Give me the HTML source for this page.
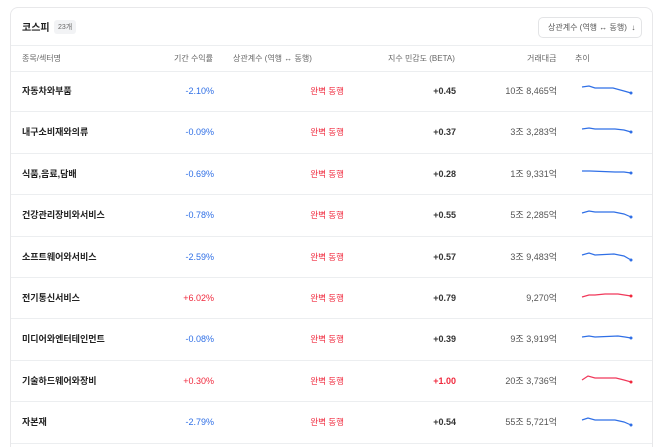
<!DOCTYPE html>
<html><head><meta charset="utf-8"><style>
*{margin:0;padding:0;box-sizing:border-box}
html,body{width:660px;height:447px;overflow:hidden}
body{background:#fff;font-family:"Liberation Sans","Noto Sans CJK KR",sans-serif;position:relative}
.card{position:absolute;left:10px;top:7px;width:643px;height:450px;border:1px solid #e8e8ea;border-radius:8px;background:#fff;overflow:hidden}
.title{position:absolute;left:11px;top:11px;font-size:10px;font-weight:bold;color:#222}
.badge{position:absolute;left:43px;top:12px;font-size:7px;color:#666;background:#f2f3f5;border-radius:3px;padding:2px 4px}
.btn{position:absolute;left:527px;top:9px;width:104px;height:21px;border:1px solid #e3e4e6;border-radius:5px;font-size:8px;color:#555;line-height:19px;padding-left:9px}
.hl{position:absolute;left:0;right:0;height:1px;background:#eceef0}
.h{position:absolute;top:45px;font-size:8px;color:#666}
.row{position:absolute;left:0;width:641px;height:41.4px;border-bottom:1px solid #eceef0;font-size:9px}
.row div{position:absolute;top:0;line-height:41px}
.n{left:11px;font-weight:bold;color:#222}
.r{right:438px}
.c{right:308px;color:#f0283c;font-size:8.5px}
.b{right:196px;font-weight:bold;color:#333}
.v{right:95px;color:#555}
.blue{color:#2f6fe6}.red{color:#f0283c}
svg{position:absolute;left:569px;top:12px}
</style></head><body>
<div class="card">
<div class="title">코스피</div><div class="badge">23개</div>
<div class="btn">상관계수 (역행 ↔ 동행) &nbsp;↓</div>
<div class="hl" style="top:37px"></div>
<div class="h" style="left:11px">종목/섹터명</div>
<div class="h" style="left:163px">기간 수익률</div>
<div class="h" style="left:222px">상관계수 (역행 ↔ 동행)</div>
<div class="h" style="left:377px">지수 민감도 (BETA)</div>
<div class="h" style="left:516px">거래대금</div>
<div class="h" style="left:564px">추이</div>
<div class="hl" style="top:63px"></div>

<div class="row" style="top:63px"><div class="n">자동차와부품</div><div class="r blue">-2.10%</div><div class="c">완벽 동행</div><div class="b">+0.45</div><div class="v">10조 8,465억</div>
<svg width="56" height="18"><path d="M2 4 L9 3 L15 5 L33 5 L44 8 L51 10" fill="none" stroke="#2f6fe6" stroke-width="1.2"/><circle cx="51" cy="10" r="1.5" fill="#2f6fe6"/></svg></div>
<div class="row" style="top:104.4px"><div class="n">내구소비재와의류</div><div class="r blue">-0.09%</div><div class="c">완벽 동행</div><div class="b">+0.37</div><div class="v">3조 3,283억</div>
<svg width="56" height="18"><path d="M2 5 L9 4 L15 5 L35 5 L44 6 L51 8" fill="none" stroke="#2f6fe6" stroke-width="1.2"/><circle cx="51" cy="8" r="1.5" fill="#2f6fe6"/></svg></div>
<div class="row" style="top:145.8px"><div class="n">식품,음료,담배</div><div class="r blue">-0.69%</div><div class="c">완벽 동행</div><div class="b">+0.28</div><div class="v">1조 9,331억</div>
<svg width="56" height="18"><path d="M2 5 L10 5 L35 6 L44 6 L51 7" fill="none" stroke="#2f6fe6" stroke-width="1.2"/><circle cx="51" cy="7" r="1.5" fill="#2f6fe6"/></svg></div>
<div class="row" style="top:187.2px"><div class="n">건강관리장비와서비스</div><div class="r blue">-0.78%</div><div class="c">완벽 동행</div><div class="b">+0.55</div><div class="v">5조 2,285억</div>
<svg width="56" height="18"><path d="M2 6 L9 4 L15 5 L34 5 L44 7 L51 10" fill="none" stroke="#2f6fe6" stroke-width="1.2"/><circle cx="51" cy="10" r="1.5" fill="#2f6fe6"/></svg></div>
<div class="row" style="top:228.6px"><div class="n">소프트웨어와서비스</div><div class="r blue">-2.59%</div><div class="c">완벽 동행</div><div class="b">+0.57</div><div class="v">3조 9,483억</div>
<svg width="56" height="18"><path d="M2 6 L9 4 L15 6 L34 5 L44 7 L51 11" fill="none" stroke="#2f6fe6" stroke-width="1.2"/><circle cx="51" cy="11" r="1.5" fill="#2f6fe6"/></svg></div>
<div class="row" style="top:270px"><div class="n">전기통신서비스</div><div class="r red">+6.02%</div><div class="c">완벽 동행</div><div class="b">+0.79</div><div class="v">9,270억</div>
<svg width="56" height="18"><path d="M2 7 L9 5 L15 5 L25 4 L38 4 L51 6" fill="none" stroke="#f0385a" stroke-width="1.2"/><circle cx="51" cy="6" r="1.5" fill="#f0283c"/></svg></div>
<div class="row" style="top:311.4px"><div class="n">미디어와엔터테인먼트</div><div class="r blue">-0.08%</div><div class="c">완벽 동행</div><div class="b">+0.39</div><div class="v">9조 3,919억</div>
<svg width="56" height="18"><path d="M2 6 L9 5 L15 6 L38 5 L45 6 L51 7" fill="none" stroke="#2f6fe6" stroke-width="1.2"/><circle cx="51" cy="7" r="1.5" fill="#2f6fe6"/></svg></div>
<div class="row" style="top:352.8px"><div class="n">기술하드웨어와장비</div><div class="r red">+0.30%</div><div class="c">완벽 동행</div><div class="b red">+1.00</div><div class="v">20조 3,736억</div>
<svg width="56" height="18"><path d="M2 7 L8 3 L15 5 L36 5 L44 7 L51 9" fill="none" stroke="#f0385a" stroke-width="1.2"/><circle cx="51" cy="9" r="1.5" fill="#f0283c"/></svg></div>
<div class="row" style="top:394.2px"><div class="n">자본재</div><div class="r blue">-2.79%</div><div class="c">완벽 동행</div><div class="b">+0.54</div><div class="v">55조 5,721억</div>
<svg width="56" height="18"><path d="M2 6 L8 4 L15 6 L35 6 L44 8 L51 11" fill="none" stroke="#2f6fe6" stroke-width="1.2"/><circle cx="51" cy="11" r="1.5" fill="#2f6fe6"/></svg></div>
</div>
</body></html>
